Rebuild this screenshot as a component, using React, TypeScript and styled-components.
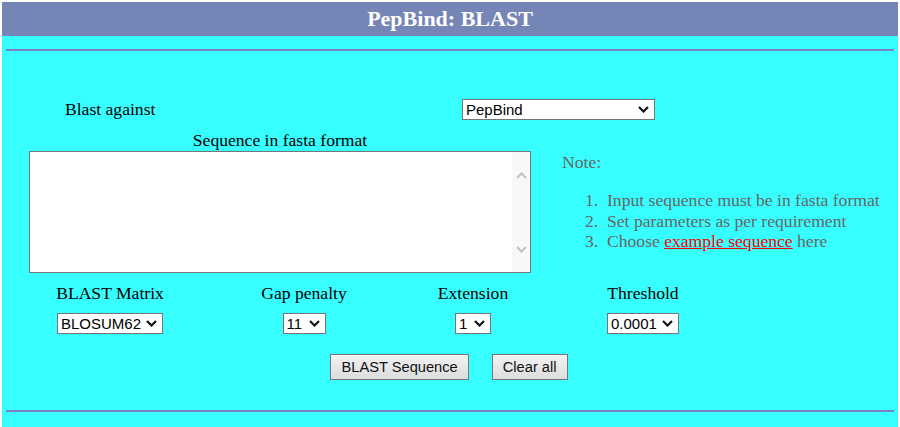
import React from 'react';
import styled, { createGlobalStyle } from 'styled-components';

const GlobalStyle = createGlobalStyle`
  html, body { margin: 0; padding: 0; background: #ffffff; }
  body {
    padding: 2px 2px 0 2px;
    font-family: "Liberation Serif", "Times New Roman", serif;
    font-size: 17.6px;
  }
`;

const Header = styled.div`
  height: 34px;
  line-height: 34px;
  background: #7585b5;
  color: #ffffff;
  font-weight: bold;
  font-size: 22px;
  text-align: center;
`;

const Panel = styled.div`
  background: #38ffff;
  min-height: 391px;
  padding: 13px 4px 16px 0;
  box-sizing: border-box;
`;

const Rule = styled.div<{ $top?: number }>`
  height: 2px;
  margin-left: 4px;
  margin-top: ${(p) => p.$top ?? 0}px;
  background: #7b80c0;
`;

const AgainstRow = styled.div`
  display: grid;
  grid-template-columns: 460px auto;
  align-items: center;
  margin-top: 48px;
  height: 21px;
`;

const AgainstLabel = styled.div`
  padding-left: 63px;
  color: #000;
`;

const SequenceRow = styled.div`
  display: grid;
  grid-template-columns: 502px 1fr;
  column-gap: 31px;
  padding-left: 27px;
  margin-top: 10px;
`;

const SeqColumn = styled.div`
  display: flex;
  flex-direction: column;
  align-items: stretch;
`;

const SeqLabel = styled.div`
  text-align: center;
  line-height: 20px;
  height: 20px;
  margin-bottom: 1px;
  color: #000;
`;

const TextWrap = styled.div`
  position: relative;
  height: 122px;
`;

const SeqArea = styled.textarea`
  display: block;
  width: 100%;
  height: 100%;
  box-sizing: border-box;
  border: 1px solid #767676;
  background: #ffffff;
  resize: none;
  overflow: hidden;
  padding: 2px 20px 2px 3px;
  font-family: "Liberation Mono", monospace;
  font-size: 13px;
  outline: none;
`;

const ScrollTrack = styled.div`
  position: absolute;
  top: 1px;
  right: 1px;
  bottom: 1px;
  width: 18px;
  background: #f8f8f8;
  display: flex;
  flex-direction: column;
  justify-content: space-between;
  align-items: center;
  padding: 20px 0 19px;
  box-sizing: border-box;
`;

const NoteColumn = styled.div`
  padding-top: 22px;
  color: #666666;
`;

const NoteTitle = styled.div`
  line-height: 20px;
`;

const NoteList = styled.ol`
  margin: 18px 0 0 0;
  padding-left: 45px;
  line-height: 20.5px;

  li::marker {
    content: counter(list-item) ".\\00a0\\00a0";
  }
`;

const ExampleLink = styled.a`
  color: #ff0000;
  text-decoration: underline;
`;

const ParamGrid = styled.div`
  display: grid;
  grid-template-columns: 216px 172px 166px 174px;
  margin-top: 10px;
`;

const ParamCell = styled.div`
  display: flex;
  flex-direction: column;
  align-items: center;
  gap: 10px;
`;

const ParamLabel = styled.div`
  line-height: 20px;
  height: 20px;
  color: #000;
`;

const SelectWrap = styled.div<{ $w: number }>`
  position: relative;
  width: ${(p) => p.$w}px;
  height: 21px;
`;

const Select = styled.select`
  appearance: none;
  -webkit-appearance: none;
  width: 100%;
  height: 100%;
  box-sizing: border-box;
  border: 1px solid #767676;
  border-radius: 0;
  background: #ffffff;
  color: #000;
  font-family: "Liberation Sans", Arial, sans-serif;
  font-size: 15px;
  padding: 0 18px 0 3px;
  margin: 0;
  outline: none;
`;

const Chevron = styled.svg`
  position: absolute;
  right: 6px;
  top: 7px;
  pointer-events: none;
`;

const ButtonRow = styled.div`
  display: flex;
  justify-content: center;
  gap: 23px;
  margin-top: 20px;
  padding-left: 2px;
`;

const Button = styled.button`
  height: 26px;
  padding: 0 10px;
  border: 1px solid #767676;
  border-radius: 0;
  background: linear-gradient(#f3f3f3, #dcdcdc);
  color: #111;
  font-family: "Liberation Sans", Arial, sans-serif;
  font-size: 14.67px;
  cursor: pointer;
`;

const SelectChevron = () => (
  <Chevron width="11" height="7" viewBox="0 0 11 7">
    <polyline points="1,1 5.5,5.5 10,1" fill="none" stroke="#111111" strokeWidth="2.2" />
  </Chevron>
);

const Dropdown: React.FC<{ w: number; options: string[] }> = ({ w, options }) => (
  <SelectWrap $w={w}>
    <Select defaultValue={options[0]}>
      {options.map((o) => (
        <option key={o} value={o}>
          {o}
        </option>
      ))}
    </Select>
    <SelectChevron />
  </SelectWrap>
);

export default function App() {
  return (
    <>
      <GlobalStyle />
      <Header>PepBind: BLAST</Header>
      <Panel>
        <Rule />
        <AgainstRow>
          <AgainstLabel>Blast against</AgainstLabel>
          <Dropdown w={193} options={['PepBind', 'Swiss-Prot']} />
        </AgainstRow>
        <SequenceRow>
          <SeqColumn>
            <SeqLabel>Sequence in fasta format</SeqLabel>
            <TextWrap>
              <SeqArea />
              <ScrollTrack>
                <svg width="11" height="7" viewBox="0 0 11 7">
                  <polyline points="1,6 5.5,1.5 10,6" fill="none" stroke="#c2c2c2" strokeWidth="2" />
                </svg>
                <svg width="11" height="7" viewBox="0 0 11 7">
                  <polyline points="1,1 5.5,5.5 10,1" fill="none" stroke="#c2c2c2" strokeWidth="2" />
                </svg>
              </ScrollTrack>
            </TextWrap>
          </SeqColumn>
          <NoteColumn>
            <NoteTitle>Note:</NoteTitle>
            <NoteList>
              <li>Input sequence must be in fasta format</li>
              <li>Set parameters as per requirement</li>
              <li>
                Choose <ExampleLink href="#">example sequence</ExampleLink> here
              </li>
            </NoteList>
          </NoteColumn>
        </SequenceRow>
        <ParamGrid>
          <ParamCell>
            <ParamLabel>BLAST Matrix</ParamLabel>
            <Dropdown w={106} options={['BLOSUM62', 'BLOSUM45', 'PAM30']} />
          </ParamCell>
          <ParamCell>
            <ParamLabel>Gap penalty</ParamLabel>
            <Dropdown w={43} options={['11', '9', '7']} />
          </ParamCell>
          <ParamCell>
            <ParamLabel>Extension</ParamLabel>
            <Dropdown w={36} options={['1', '2']} />
          </ParamCell>
          <ParamCell>
            <ParamLabel>Threshold</ParamLabel>
            <Dropdown w={72} options={['0.0001', '0.001', '0.01']} />
          </ParamCell>
        </ParamGrid>
        <ButtonRow>
          <Button type="button">BLAST Sequence</Button>
          <Button type="button">Clear all</Button>
        </ButtonRow>
        <Rule $top={30} />
      </Panel>
    </>
  );
}
